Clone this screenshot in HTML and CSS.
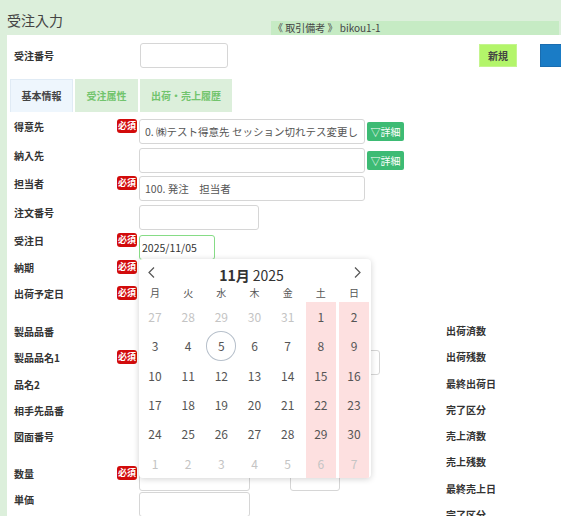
FILE: index.html
```html
<!DOCTYPE html>
<html lang="ja">
<head>
    <meta charset="UTF-8">
    <meta name="viewport" content="width=device-width, initial-scale=1.0">
    <title>受注入力</title>
    <link rel="stylesheet" href="styles.css">
</head>
<body>
<!-- 見出し -->
<div class="page-head">
    <h1>受注入力</h1>
    <div class="memo">《 取引備考 》 bikou1-1</div>
</div>

<div class="panel">
    <div class="order-no">
        <span class="label">受注番号</span>
        <input type="text" class="input w-order">
        <button class="new-btn">新規</button>
        <button class="blue-btn"></button>
    </div>

    <!-- タブ -->
    <ul class="tabs">
        <li class="active">基本情報</li>
        <li>受注属性</li>
        <li class="wide">出荷・売上履歴</li>
    </ul>

    <div class="form">
        <div class="row">
            <span class="label">得意先</span>
            <span class="req">必須</span>
            <input type="text" class="input w-long" value="0. ㈱テスト得意先 セッション切れテス変更し">
            <button class="detail-btn">▽詳細</button>
        </div>
        <div class="row">
            <span class="label">納入先</span>
            <span class="req-space"></span>
            <input type="text" class="input w-long">
            <button class="detail-btn">▽詳細</button>
        </div>
        <div class="row">
            <span class="label">担当者</span>
            <span class="req">必須</span>
            <input type="text" class="input w-long" value="100. 発注　担当者">
        </div>
        <div class="row">
            <span class="label">注文番号</span>
            <span class="req-space"></span>
            <input type="text" class="input w-mid">
        </div>
        <div class="row short">
            <span class="label">受注日</span>
            <span class="req">必須</span>
            <div class="date-wrap">
                <input type="text" class="input date-input" value="2025/11/05">

                <!-- カレンダー -->
                <div class="calendar">
                    <div class="cal-head">
                        <span class="cal-nav"><svg width="7" height="11" viewBox="0 0 7 11"><polyline points="6,0.5 1,5.5 6,10.5" fill="none" stroke="#555" stroke-width="1.2"/></svg></span>
                        <span class="cal-title"><b>11月</b> 2025</span>
                        <span class="cal-nav"><svg width="7" height="11" viewBox="0 0 7 11"><polyline points="1,0.5 6,5.5 1,10.5" fill="none" stroke="#555" stroke-width="1.2"/></svg></span>
                    </div>
                    <div class="cal-week">
                        <span>月</span><span>火</span><span>水</span><span>木</span><span>金</span><span>土</span><span>日</span>
                    </div>
                    <div class="cal-days">
                        <span class="out">27</span><span class="out">28</span><span class="out">29</span><span class="out">30</span><span class="out">31</span><span class="we">1</span><span class="we">2</span>
                        <span>3</span><span>4</span><span class="sel">5</span><span>6</span><span>7</span><span class="we">8</span><span class="we">9</span>
                        <span>10</span><span>11</span><span>12</span><span>13</span><span>14</span><span class="we">15</span><span class="we">16</span>
                        <span>17</span><span>18</span><span>19</span><span>20</span><span>21</span><span class="we">22</span><span class="we">23</span>
                        <span>24</span><span>25</span><span>26</span><span>27</span><span>28</span><span class="we">29</span><span class="we">30</span>
                        <span class="out">1</span><span class="out">2</span><span class="out">3</span><span class="out">4</span><span class="out">5</span><span class="we out">6</span><span class="we out">7</span>
                    </div>
                </div>
            </div>
        </div>
        <div class="row short">
            <span class="label">納期</span>
            <span class="req">必須</span>
            <input type="text" class="input w-date">
        </div>
        <div class="row short">
            <span class="label">出荷予定日</span>
            <span class="req">必須</span>
            <input type="text" class="input w-date">
        </div>

        <!-- 製品 -->
        <div class="product">
            <div class="col">
                <div class="row thin">
                    <span class="label">製品品番</span>
                    <span class="req-space"></span>
                    <input type="text" class="input w-mid">
                </div>
                <div class="row thin">
                    <span class="label">製品品名1</span>
                    <span class="req">必須</span>
                    <input type="text" class="input w-name">
                </div>
                <div class="row thin">
                    <span class="label">品名2</span>
                    <span class="req-space"></span>
                    <input type="text" class="input w-mid">
                </div>
                <div class="row thin">
                    <span class="label">相手先品番</span>
                    <span class="req-space"></span>
                    <input type="text" class="input w-mid">
                </div>
                <div class="row thin">
                    <span class="label">図面番号</span>
                    <span class="req-space"></span>
                    <input type="text" class="input w-mid">
                </div>
                <div class="row qty">
                    <span class="label">数量</span>
                    <span class="req">必須</span>
                    <input type="text" class="input w-num">
                    <input type="text" class="input w-unit">
                </div>
                <div class="row thin">
                    <span class="label">単価</span>
                    <span class="req-space"></span>
                    <input type="text" class="input w-num">
                </div>
            </div>
            <div class="col right">
                <div class="row thin"><span class="label">出荷済数</span></div>
                <div class="row thin"><span class="label">出荷残数</span></div>
                <div class="row thin"><span class="label">最終出荷日</span></div>
                <div class="row thin"><span class="label">完了区分</span></div>
                <div class="row thin"><span class="label">売上済数</span></div>
                <div class="row thin"><span class="label">売上残数</span></div>
                <div class="row thin"><span class="label">最終売上日</span></div>
                <div class="row thin"><span class="label">完了区分</span></div>
            </div>
        </div>
    </div>
</div>
</body>
</html>
```

FILE: styles.css
```css
* {
    box-sizing: border-box;
    margin: 0;
    padding: 0;
}

body {
    font-family: "Noto Sans CJK JP", "Noto Sans", sans-serif;
    background-color: #dcefdb;
    color: #333;
    height: 516px;
    overflow: hidden;
}

/* 見出し */
.page-head {
    display: flex;
    height: 35px;
}

.page-head h1 {
    width: 271px;
    padding: 10px 0 0 7px;
    font-size: 14px;
    font-weight: normal;
    line-height: 20px;
    color: #444;
}

.memo {
    align-self: flex-end;
    flex: 1;
    margin-right: 2px;
    height: 14px;
    padding-left: 2px;
    background-color: #c6ebc4;
    font-size: 10px;
    line-height: 14px;
    color: #444;
    white-space: nowrap;
}

.panel {
    margin-left: 7px;
    height: 481px;
    background-color: #fff;
}

.label {
    width: 103px;
    flex-shrink: 0;
    font-size: 10px;
    font-weight: bold;
    line-height: 15px;
    color: #333;
    white-space: nowrap;
}

.input {
    height: 25px;
    flex-shrink: 0;
    padding: 0 5px;
    border: 1px solid #d6d6d6;
    border-radius: 3px;
    background-color: #fff;
    font-family: inherit;
    font-size: 10.5px;
    color: #555;
}

.order-no {
    display: flex;
    align-items: center;
    padding: 8px 0 0 7px;
}

.order-no .label {
    width: 126px;
}

.w-order { width: 88px; }
.w-long { width: 226px; }
.w-mid { width: 120px; }
.w-date { width: 76px; }
.w-name { width: 241px; }
.w-num { width: 111px; }
.w-unit { width: 50px; margin-left: 40px; }

.new-btn {
    margin-left: 251px;
    width: 38px;
    height: 23px;
    flex-shrink: 0;
    border: 1px solid #c4f58e;
    background-color: #b3f56a;
    font-family: inherit;
    font-size: 10px;
    font-weight: bold;
    color: #444;
    white-space: nowrap;
}

.blue-btn {
    margin-left: 23px;
    width: 40px;
    height: 23px;
    flex-shrink: 0;
    border: 1px solid #1a6db0;
    background-color: #1a7cc6;
}

/* タブ */
.tabs {
    list-style: none;
    display: flex;
    gap: 2px;
    margin-top: 11px;
    padding-left: 3px;
}

.tabs li {
    width: 63px;
    height: 33px;
    background-color: #dcefdb;
    font-size: 10px;
    font-weight: bold;
    line-height: 33px;
    text-align: center;
    color: #72c46d;
}

.tabs li.wide {
    width: 92px;
}

.tabs li.active {
    background-color: #eef6fd;
    border: 1px solid #e0ebf5;
    border-bottom: none;
    color: #444;
    line-height: 31px;
}

.form {
    margin-top: 7px;
}

.row {
    display: flex;
    align-items: flex-start;
    height: 28.5px;
    padding-left: 7px;
}

.row.short {
    height: 26.5px;
}

.row.thin {
    height: 26.25px;
}

.row.qty {
    height: 26px;
    margin-top: 10.75px;
}

.req,
.req-space {
    width: 20px;
    height: 14px;
    margin-right: 2px;
    flex-shrink: 0;
}

.req {
    border-radius: 3px;
    background-color: #d20b0b;
    font-size: 9px;
    font-weight: bold;
    line-height: 14px;
    text-align: center;
    color: #fff;
}

.detail-btn {
    margin: 3px 0 0 2px;
    width: 37px;
    height: 19px;
    flex-shrink: 0;
    border: none;
    border-radius: 2px;
    background-color: #3dbb74;
    font-family: inherit;
    font-size: 10px;
    color: #fff;
}

/* 製品 */
.product {
    display: grid;
    grid-template-columns: 432px 1fr;
    margin-top: 11.5px;
}

.product .right {
    margin-top: -1px;
}

/* カレンダー */
.date-wrap {
    position: relative;
}

.date-input {
    width: 76px;
    padding-left: 2px;
    border-color: #86dc86;
    color: #333;
}

.calendar {
    position: absolute;
    top: 26px;
    left: 0;
    z-index: 10;
    width: 232px;
    height: 219px;
    border-radius: 4px;
    background-color: #fff;
    box-shadow: 0 1px 6px rgba(0, 0, 0, 0.18);
    overflow: hidden;
}

.cal-head {
    display: flex;
    height: 25px;
    padding: 0 10px 0 9px;
}

.cal-nav {
    padding-top: 8px;
    line-height: 0;
}

.cal-title {
    flex: 1;
    margin-right: 6px;
    padding-top: 8px;
    font-size: 14px;
    line-height: 17px;
    text-align: center;
    color: #333;
}

.cal-week,
.cal-days {
    display: grid;
    grid-template-columns: repeat(7, 1fr);
    column-gap: 3.2px;
    padding: 0 2px 0 1px;
}

.cal-week span {
    height: 18px;
    font-size: 10px;
    line-height: 18px;
    text-align: center;
    color: #555;
}

.cal-days span {
    height: 29.33px;
    font-size: 12px;
    line-height: 29px;
    text-align: center;
    color: #555;
}

.cal-days .we {
    background-color: #fde0e0;
}

.cal-days .out {
    color: #c4c4c4;
}

.cal-days .sel {
    border: 1px solid #b7c0cb;
    border-radius: 50%;
    line-height: 27px;
}
```
